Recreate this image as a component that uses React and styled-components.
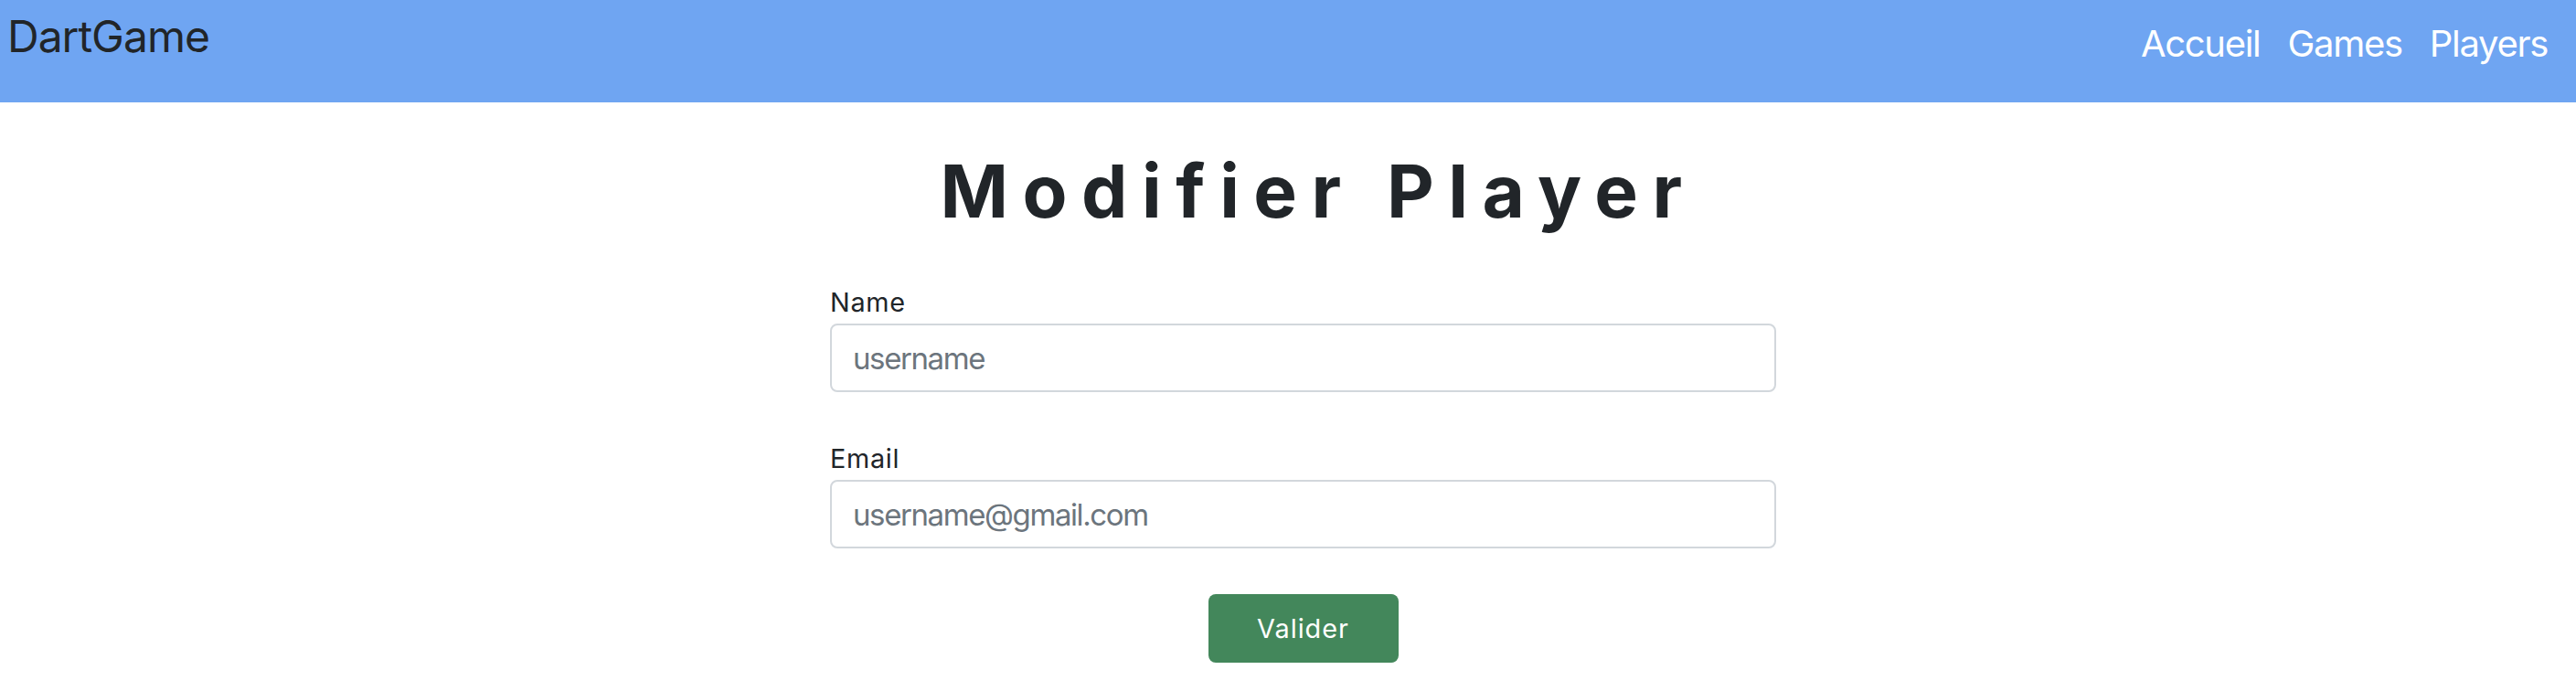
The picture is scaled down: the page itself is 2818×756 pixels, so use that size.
import React from "react";
import styled, { createGlobalStyle } from "styled-components";

const GlobalStyles = createGlobalStyle`
  html, body {
    margin: 0;
    padding: 0;
    background: #ffffff;
  }
  body {
    font-family: Inter, "Noto Sans", "Liberation Sans", sans-serif;
    color: #212529;
  }
  * {
    box-sizing: border-box;
  }
`;

/* NAVBAR */
const Navbar = styled.nav`
  display: flex;
  justify-content: space-between;
  align-items: flex-start;
  height: 112px;
  padding: 0 31px 0 8px;
  background-color: #6fa5f2;
`;

const Brand = styled.a`
  padding-top: 16px;
  font-size: 48px;
  line-height: 48px;
  letter-spacing: -1px;
  color: #212529;
  text-decoration: none;
  cursor: pointer;
`;

const NavList = styled.ul`
  display: flex;
  gap: 30px;
  margin: 0;
  padding: 28px 0 0;
  list-style: none;
`;

const NavLink = styled.a`
  font-size: 40px;
  line-height: 40px;
  letter-spacing: -1.3px;
  color: #ffffff;
  text-decoration: none;
  cursor: pointer;
`;

/* PAGE */
const Page = styled.main`
  display: flex;
  justify-content: center;
  padding: 49px 0 0 33px;
`;

const Column = styled.div`
  display: flex;
  flex-direction: column;
  width: 1035px;
`;

const Title = styled.h1`
  margin: 0 0 52px;
  padding-left: 33px;
  font-size: 80px;
  line-height: 96px;
  font-weight: 700;
  letter-spacing: 15.5px;
  text-align: center;
  color: #212529;
`;

const Form = styled.form`
  display: flex;
  flex-direction: column;
`;

const Field = styled.div`
  display: flex;
  flex-direction: column;
  margin-bottom: ${props => props.spacing || "51px"};
`;

const Label = styled.label`
  margin-bottom: 2px;
  font-size: 28.8px;
  line-height: 43.2px;
  letter-spacing: 0.7px;
  color: #212529;
`;

const Input = styled.input`
  width: 100%;
  height: 75px;
  padding: 0 23px;
  border: 2px solid #d2d7dc;
  border-radius: 8px;
  font-family: inherit;
  font-size: 33px;
  letter-spacing: -1.4px;
  color: #212529;
  background: #ffffff;
  outline: none;
  &::placeholder {
    color: #6c757d;
  }
`;

const Submit = styled.button`
  align-self: center;
  width: 208px;
  height: 75px;
  border: none;
  border-radius: 8px;
  background-color: #43875b;
  color: #ffffff;
  font-family: inherit;
  font-size: 28.8px;
  letter-spacing: 1px;
  cursor: pointer;
`;

export default function App() {
  return (
    <>
      <GlobalStyles />
      <Navbar>
        <Brand>DartGame</Brand>
        <NavList>
          <li><NavLink>Accueil</NavLink></li>
          <li><NavLink>Games</NavLink></li>
          <li><NavLink>Players</NavLink></li>
        </NavList>
      </Navbar>
      <Page>
        <Column>
          <Title>Modifier Player</Title>
          <Form onSubmit={e => e.preventDefault()}>
            <Field>
              <Label htmlFor="name">Name</Label>
              <Input id="name" type="text" placeholder="username" />
            </Field>
            <Field spacing="50px">
              <Label htmlFor="email">Email</Label>
              <Input id="email" type="email" placeholder="username@gmail.com" />
            </Field>
            <Submit type="submit">Valider</Submit>
          </Form>
        </Column>
      </Page>
    </>
  );
}
